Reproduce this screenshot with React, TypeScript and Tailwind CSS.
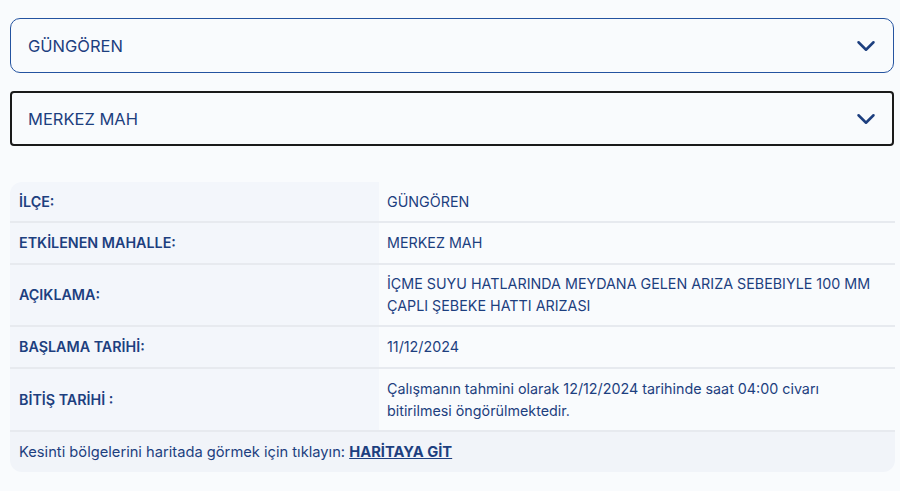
import { ChevronDown } from "lucide-react";

const rows = [
  { label: "İLÇE:", value: "GÜNGÖREN", h: "h-[41px]" },
  { label: "ETKİLENEN MAHALLE:", value: "MERKEZ MAH", h: "h-[42px]" },
  {
    label: "AÇIKLAMA:",
    value: "İÇME SUYU HATLARINDA MEYDANA GELEN ARIZA SEBEBIYLE 100 MM ÇAPLI ŞEBEKE HATTI ARIZASI",
    h: "h-[62px]",
  },
  { label: "BAŞLAMA TARİHİ:", value: "11/12/2024", h: "h-[42px]" },
  {
    label: "BİTİŞ TARİHİ :",
    value: "Çalışmanın tahmini olarak 12/12/2024 tarihinde saat 04:00 civarı bitirilmesi öngörülmektedir.",
    h: "h-[63px]",
  },
];

const SelectBox = ({ text, active }: { text: string; active?: boolean }) => {
  return (
    <div
      className={
        active
          ? "flex h-[55px] items-center justify-between rounded-[4px] border-2 border-[#1a1a1a] pl-[16px] pr-[11px]"
          : "flex h-[55px] items-center justify-between rounded-[10px] border border-[#2453a0] pl-[17px] pr-[12px]"
      }
    >
      <span className="pt-[2px] text-[16.5px] text-[#1d3f7f]">{text}</span>
      <ChevronDown className="h-[30px] w-[30px] text-[#1d3f7f]" strokeWidth={2} />
    </div>
  );
};

export default function App() {
  return (
    <div className="min-h-[491px] w-[900px] bg-[#f9fbfd] pl-[10px] pr-[6px] pt-[18px] font-['Inter',sans-serif] text-[#1d3f7f]">
      <SelectBox text="GÜNGÖREN" />
      <div className="mt-[18px]">
        <SelectBox text="MERKEZ MAH" active />
      </div>

      <div className="mt-[36px] w-[885px] overflow-hidden rounded-[12px] text-[14.3px]">
        {rows.map((row) => (
          <div
            key={row.label}
            className={`grid grid-cols-[369px_1fr] border-b-2 border-[#e7eaef] ${row.h}`}
          >
            <div className="flex items-center bg-[#f3f6fb] px-[9px] font-semibold">{row.label}</div>
            <div className="flex items-center bg-[#f9fbfd] px-[8px] leading-[22px]">
              <span className="max-w-[492px]">{row.value}</span>
            </div>
          </div>
        ))}
        <div className="flex h-[40px] items-center bg-[#f1f4f9] px-[9px] text-[14.7px]">
          <span>
            Kesinti bölgelerini haritada görmek için tıklayın:{" "}
            <a href="#" className="font-bold underline">
              HARİTAYA GİT
            </a>
          </span>
        </div>
      </div>
    </div>
  );
}
